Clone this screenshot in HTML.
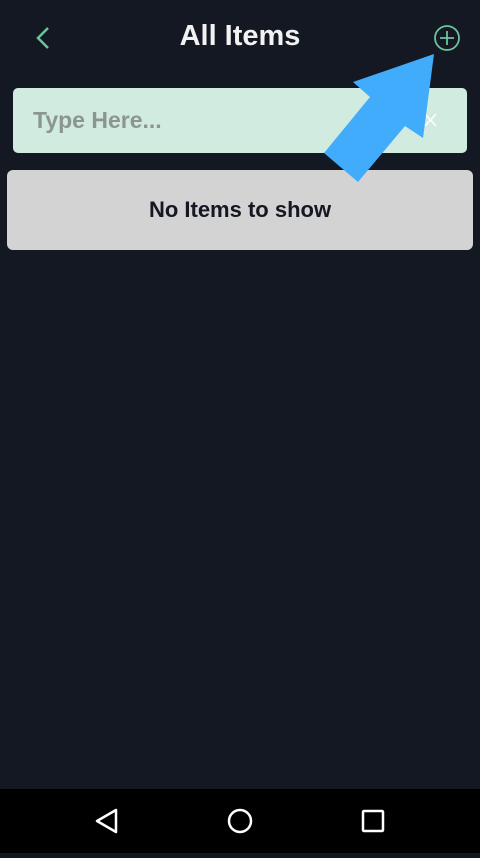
<!DOCTYPE html>
<html><head><style>
body{margin:0;width:480px;height:853px;background:#141823;position:relative;overflow:hidden;font-family:"Liberation Sans",sans-serif}
.title{position:absolute;top:20px;left:0;width:480px;text-align:center;color:#f2f2f2;font-weight:bold;font-size:29px}
.search{position:absolute;left:13px;top:88px;width:454px;height:65px;background:#d1ebe0;border-radius:5px}
.search span{position:absolute;left:20px;top:19px;font-size:23px;font-weight:bold;color:#8a968f}
.empty{position:absolute;left:7px;top:170px;width:466px;height:80px;background:#d3d3d3;border-radius:6px;text-align:center;line-height:80px;font-size:22px;font-weight:bold;color:#151822}
.nav{position:absolute;left:0;top:789px;width:480px;height:64px;background:#000}
</style></head><body>
<svg style="position:absolute;left:0;top:0" width="480" height="260">
<path d="M48 28 L38 38 L48 48" stroke="#6cc49d" stroke-width="2.5" fill="none"/>
<circle cx="447" cy="38" r="12" stroke="#6cc49d" stroke-width="1.8" fill="none"/>
<path d="M447 31V45M440 38H454" stroke="#6cc49d" stroke-width="1.8"/>
</svg>
<div class="title">All Items</div>
<div class="search"><span>Type Here...</span></div>
<div class="empty">No Items to show</div>
<svg style="position:absolute;left:0;top:0" width="480" height="260">
<path d="M425 114L436 126M436 114L425 126" stroke="#fff" stroke-width="1.5"/>
<polygon points="434,54 353,82 370,97 324,153 358,182 405,126 423,138" fill="#41acfb"/>
</svg>
<div class="nav">
<svg width="480" height="64">
<path d="M116 21L116 43L97 32Z" stroke="#fff" stroke-width="2.5" fill="none" stroke-linejoin="round"/>
<circle cx="240" cy="32" r="11" stroke="#fff" stroke-width="2.5" fill="none"/>
<rect x="363" y="22" width="20" height="20" stroke="#fff" stroke-width="2.5" fill="none" rx="1"/>
</svg></div>
</body></html>
